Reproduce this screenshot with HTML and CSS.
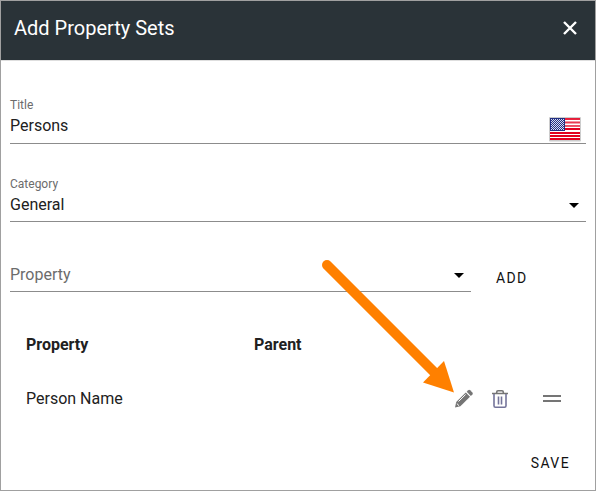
FILE: index.html
```html
<!DOCTYPE html>
<html lang="en">
<head>
<meta charset="utf-8">
<title>Add Property Sets</title>
<link rel="stylesheet" href="styles.css">
</head>
<body>
<div class="dialog">
  <header class="header">
    <h1 class="heading">Add Property Sets</h1>
    <svg class="close" width="16" height="16" viewBox="0 0 16 16"><path d="M2 2L14 14M14 2L2 14"/></svg>
  </header>
  <main class="content">
    <div class="field">
      <div class="text">
        <span class="label">Title</span>
        <span class="value">Persons</span>
      </div>
      <svg class="flag" width="32" height="25" viewBox="0 0 32 25">
        <defs>
          <pattern id="stars" width="2" height="2" patternUnits="userSpaceOnUse">
            <path class="star" d="M0 0h1v1h-1zM1 1h1v1h-1z"/>
          </pattern>
          <linearGradient id="shine" x1="0" y1="0" x2="0" y2="1">
            <stop offset="0" stop-color="#fff" stop-opacity=".1"/>
            <stop offset="1" stop-color="#fff" stop-opacity=".35"/>
          </linearGradient>
        </defs>
        <rect class="shade" x="0" y="0" width="32" height="24.5" rx="1"/>
        <rect class="white" x="1" y="1" width="30" height="22"/>
        <path class="stripes" d="M1 2H31M1 5.500H31M1 9H31M1 12H31M1 16H31M1 19H31M1 22H31"/>
        <rect x="16" y="1" width="15" height="9" fill="url(#shine)"/>
        <rect class="canton" x="1" y="1" width="15" height="13"/>
        <rect x="2" y="2" width="13" height="11" fill="url(#stars)"/>
      </svg>
    </div>
    <div class="field category">
      <div class="text">
        <span class="label">Category</span>
        <span class="value">General</span>
      </div>
      <svg class="caret" width="10" height="5" viewBox="0 0 10 5"><path d="M0 0H10L5 5Z"/></svg>
    </div>
    <div class="picker">
      <div class="field select">
        <span class="value placeholder">Property</span>
        <svg class="caret" width="10" height="5" viewBox="0 0 10 5"><path d="M0 0H10L5 5Z"/></svg>
      </div>
      <button class="button">ADD</button>
    </div>
    <div class="table">
      <div class="row head"><span>Property</span><span>Parent</span></div>
      <div class="row">
        <span>Person Name</span><span></span>
        <div class="actions">
          <svg class="pencil" width="20" height="20" viewBox="0 0 20 20">
            <path d="M1 18.500L2.200 13L11.800 3.600L16 7.800L6.400 17.300Z"/>
            <path d="M12.700 2.700L14.300 1.200Q15.200 .5 16.100 1.300L18.400 3.600Q19.200 4.500 18.400 5.400L16.900 6.900Z"/>
            <path class="glint" d="M4.500 12.500L11.600 5.500M2.800 14.500L5 16.700"/>
          </svg>
          <svg class="trash" width="16" height="18" viewBox="0 0 16 18">
            <path class="rim" d="M0 3.500H16M4.700 3V2.200Q4.700 .8 6 .8H10Q11.300 .8 11.300 2.200V3"/>
            <path class="can" d="M2 4V15.800Q2 17.200 3.400 17.200H12.600Q14 17.200 14 15.800V4M6.500 6.500V14.500M9.500 6.500V14.500"/>
          </svg>
          <svg class="grip" width="18" height="8" viewBox="0 0 18 8"><path d="M0 0H18V2H0ZM0 5H18V7H0Z"/></svg>
        </div>
      </div>
    </div>
    <button class="button save">SAVE</button>
  </main>
  <svg class="arrow" width="140" height="140" viewBox="0 0 140 140">
    <path class="shaft" d="M7 7L115 115"/>
    <path class="tip" d="M134 134.500L124 103L103 124.500Z"/>
  </svg>
</div>
</body>
</html>
```
FILE: styles.css
```css
* { box-sizing: border-box; }
body { margin: 0; font-family: Roboto, sans-serif; background: #fff; color: #212121; }
svg { display: block; flex: none; }
.dialog { position: relative; width: 596px; height: 491px; border: 1px solid #a0a0a0; overflow: hidden; }
.header { height: 60px; padding: 0 17px 4px 13px; display: flex; align-items: center; justify-content: space-between; background: #2a3338; border-bottom: 1px solid #dedede; color: #fff; }
.heading { margin: 0 0 2px; font-size: 20px; font-weight: 400; line-height: 24px; }
.close { margin-bottom: 1px; }
.close path { stroke: #fff; stroke-width: 2.4; fill: none; }
.content { padding: 35px 9px 0; display: flex; flex-direction: column; }
.field { height: 48px; border-bottom: 1px solid #8c8c8c; display: flex; justify-content: space-between; }
.text { display: flex; flex-direction: column; }
.label { font-size: 12px; line-height: 18px; color: #6c6c6c; }
.value { font-size: 16px; line-height: 24px; }
.flag { margin: 21px 5px 0 0; }
.shade { fill: #ccc; }
.white { fill: #fff; }
.stripes { stroke: #e3001f; stroke-width: 2; }
.canton { fill: #243083; }
.star { fill: #d8dcf2; }
.category { margin-top: 31px; height: 47px; }
.caret { margin: 28px 7px 0 0; fill: #000; }
.picker { margin-top: 22px; display: flex; }
.select { width: 461px; }
.select .value { margin-top: 19px; }
.select .caret { margin-top: 29px; }
.placeholder { color: #6c6c6c; }
.button { border: 0; padding: 0; background: none; color: #111; font: 400 14px/20px Roboto, sans-serif; letter-spacing: 1.4px; }
.picker .button { margin: 10px 0 0 25px; padding-top: 10px; }
.table { margin-top: 25px; padding: 0 16px; }
.row { display: grid; grid-template-columns: 228px 200px 1fr; height: 54px; align-items: center; font-size: 16px; }
.head { font-weight: 700; }
.actions { display: flex; align-items: center; padding-top: 2px; }
.pencil { fill: #757575; }
.glint { stroke: #fff; stroke-width: 1; fill: none; }
.trash { margin-left: 18px; fill: none; stroke: #757575; stroke-width: 1.6; }
.can { stroke: #74749a; }
.grip { margin-left: 35px; fill: #757575; }
.save { align-self: flex-end; margin: 28px 16px 0 0; }
.arrow { position: absolute; left: 319px; top: 257px; }
.shaft { stroke: #ff8000; stroke-width: 10; stroke-linecap: round; }
.tip { fill: #ff8000; }
```
